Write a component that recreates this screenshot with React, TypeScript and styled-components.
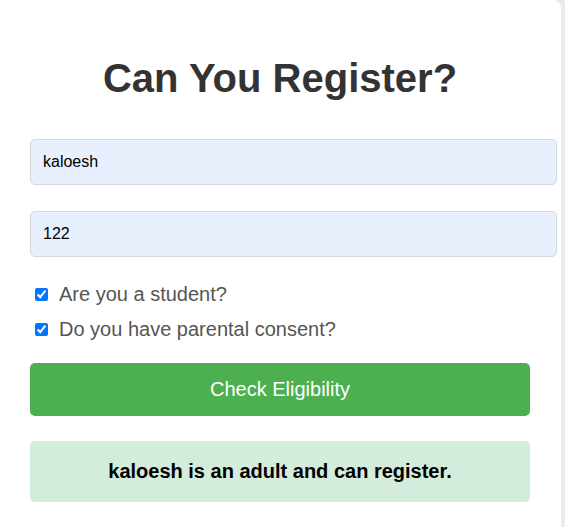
import React, { useState } from "react";
import styled, { createGlobalStyle } from "styled-components";

const GlobalStyle = createGlobalStyle`
  html, body {
    margin: 0;
    padding: 0;
    background: #ebebeb;
    font-family: "Liberation Sans", Arial, sans-serif;
  }
  * { box-sizing: border-box; }
`;

const Card = styled.div`
  width: 561px;
  min-height: 527px;
  background: #ffffff;
  border-top-right-radius: 8px;
  padding: 55px 31px 0 30px;
  display: flex;
  flex-direction: column;
`;

const Title = styled.h1`
  margin: 0 0 38px 0;
  font-size: 40px;
  line-height: 46px;
  font-weight: 700;
  color: #333333;
  text-align: center;
`;

const Input = styled.input`
  display: block;
  width: 527px;
  height: 46px;
  margin: 0 0 ${(p: { $gap: number }) => p.$gap}px 0;
  padding: 0 12px;
  border: 1px solid #d3d9e1;
  border-radius: 5px;
  background: #e8f0fe;
  color: #000000;
  font-family: "Liberation Sans", Arial, sans-serif;
  font-size: 16px;
  outline: none;
`;

const CheckRow = styled.label`
  display: flex;
  align-items: center;
  height: 23px;
  margin-bottom: ${(p: { $gap: number }) => p.$gap}px;
  font-size: 20px;
  line-height: 23px;
  color: #555555;
`;

const Check = styled.input`
  width: 13px;
  height: 13px;
  margin: 0 11px 0 5px;
  accent-color: #0075ff;
`;

const Button = styled.button`
  width: 500px;
  height: 53px;
  border: none;
  border-radius: 5px;
  background: #4caf50;
  color: #ffffff;
  font-family: "Liberation Sans", Arial, sans-serif;
  font-size: 20px;
  cursor: pointer;
  padding: 0;
`;

const Result = styled.div`
  width: 500px;
  margin-top: 25px;
  padding: 19px 10px;
  background: #d4ecdb;
  border-radius: 5px;
  font-size: 20px;
  line-height: 23px;
  font-weight: 700;
  color: #000000;
  text-align: center;
`;

export default function App() {
  const [name, setName] = useState("kaloesh");
  const [age, setAge] = useState("122");
  const [student, setStudent] = useState(true);
  const [consent, setConsent] = useState(true);

  return (
    <>
      <GlobalStyle />
      <Card>
        <Title>Can You Register?</Title>
        <Input $gap={26} value={name} onChange={(e) => setName(e.target.value)} />
        <Input $gap={26} value={age} onChange={(e) => setAge(e.target.value)} />
        <CheckRow $gap={12}>
          <Check type="checkbox" checked={student} onChange={() => setStudent(!student)} />
          Are you a student?
        </CheckRow>
        <CheckRow $gap={22}>
          <Check type="checkbox" checked={consent} onChange={() => setConsent(!consent)} />
          Do you have parental consent?
        </CheckRow>
        <Button>Check Eligibility</Button>
        <Result>{name} is an adult and can register.</Result>
      </Card>
    </>
  );
}
